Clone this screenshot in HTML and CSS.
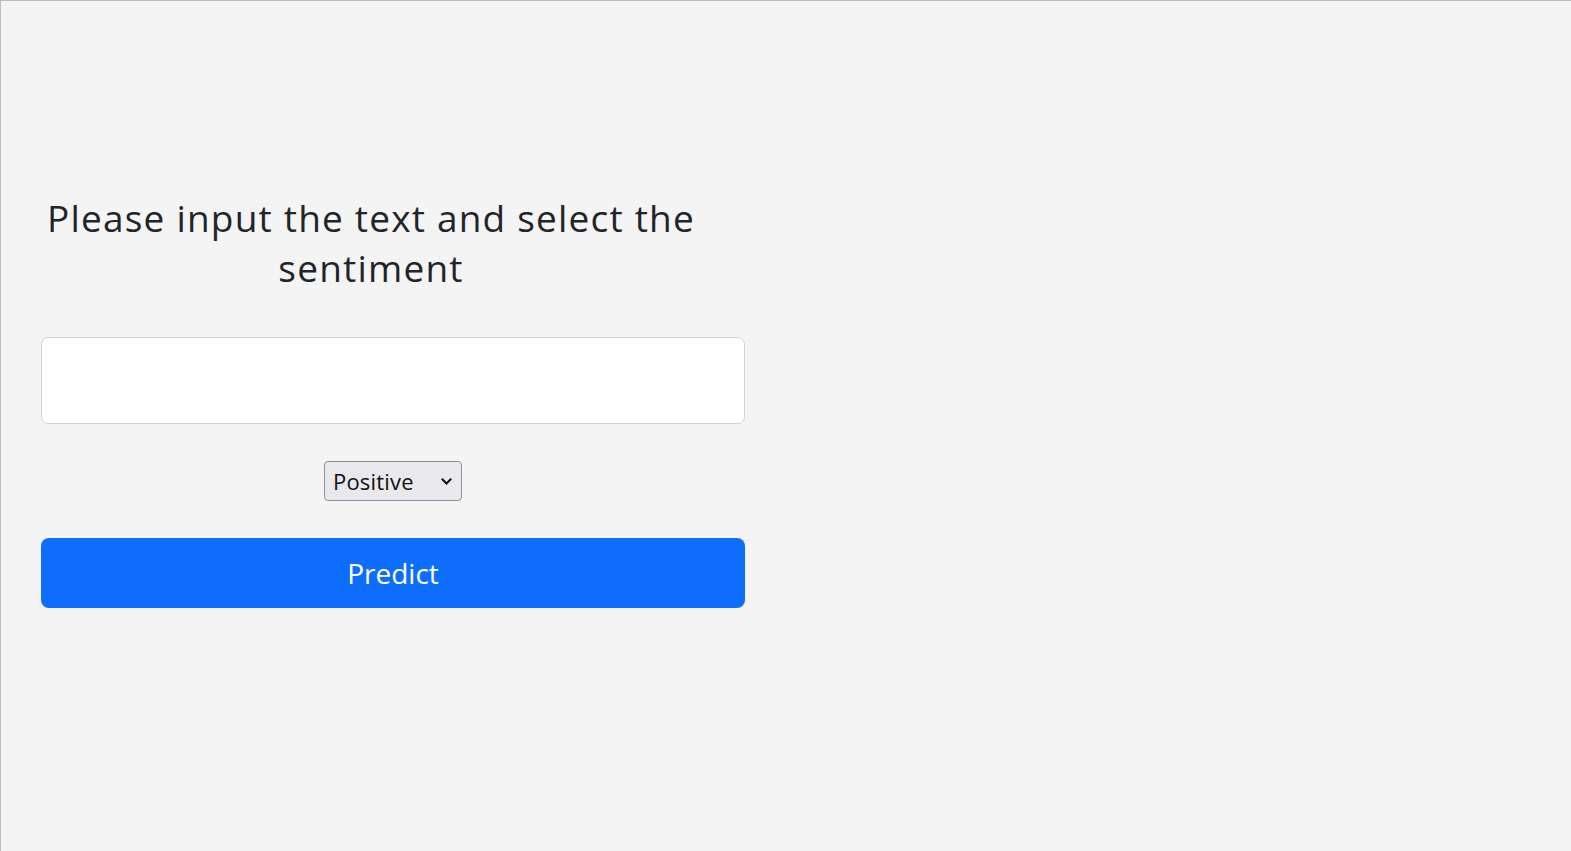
FILE: index.html
```html
<!DOCTYPE html>
<html lang="en">
<head>
<meta charset="utf-8">
<title>Sentiment</title>
<link rel="stylesheet" href="styles.css">
</head>
<body>
<div class="page">
  <div class="panel">
    <h2 class="title">Please input the text and select the sentiment</h2>
    <form class="form">
      <input class="text-input" type="text" aria-label="Text">
      <div class="select-row">
        <span class="select-wrap">
          <select class="sentiment-select" aria-label="Sentiment">
            <option>Positive</option>
            <option>Negative</option>
          </select>
          <svg class="chevron" width="13" height="9" viewBox="0 0 13 9"><path d="M1.8 1.8 L6.5 6.5 L11.2 1.8" fill="none" stroke="#111" stroke-width="2"/></svg>
        </span>
      </div>
      <button class="predict-btn" type="button">Predict</button>
    </form>
  </div>
</div>
</body>
</html>
```
FILE: styles.css
```css
html, body {
  margin: 0;
  padding: 0;
  height: 100%;
}
body {
  font-family: "Open Sans", "Noto Sans", sans-serif;
  color: #212529;
  background: #f4f4f4;
}
.page {
  box-sizing: border-box;
  min-height: 100vh;
  border-top: 1px solid #bdbdbd;
  border-left: 1px solid #bdbdbd;
  background: #f4f4f4;
  padding-top: 192px;
}
.panel {
  width: 744px;
}
.title {
  width: 740px;
  margin: 0;
  text-align: center;
  font-weight: 400;
  font-size: 37px;
  line-height: 50px;
  letter-spacing: 1.2px;
}
.form {
  padding-left: 40px;
  padding-top: 44px;
  display: flex;
  flex-direction: column;
  gap: 37px;
}
.text-input {
  box-sizing: border-box;
  width: 704px;
  height: 87px;
  margin: 0;
  border: 1px solid #ced4da;
  border-radius: 7px;
  background: #fff;
  font-family: inherit;
  font-size: 24px;
  padding: 0 16px;
  outline: none;
}
.select-row {
  width: 704px;
  display: flex;
  justify-content: center;
}
.select-wrap {
  position: relative;
  display: inline-block;
}
.sentiment-select {
  box-sizing: border-box;
  appearance: none;
  -webkit-appearance: none;
  width: 138px;
  height: 40px;
  margin: 0;
  padding: 0 0 0 8px;
  border: 1px solid #8f8f9d;
  border-radius: 4px;
  background: #e9e9ed;
  color: #111;
  font-family: inherit;
  font-size: 22px;
  letter-spacing: 0.2px;
}
.chevron {
  position: absolute;
  right: 9px;
  top: 16px;
  pointer-events: none;
}
.predict-btn {
  box-sizing: border-box;
  width: 704px;
  height: 70px;
  margin: 0;
  border: none;
  border-radius: 8px;
  background: #0d6efd;
  color: #fff;
  font-family: inherit;
  font-size: 28px;
  letter-spacing: 0;
  cursor: pointer;
}
```
